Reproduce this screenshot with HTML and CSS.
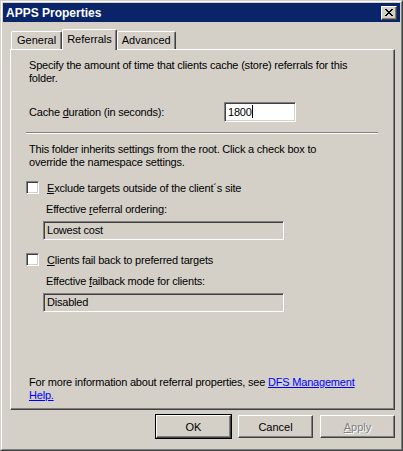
FILE: index.html
```html
<!DOCTYPE html>
<html lang="en">
<head>
    <meta charset="UTF-8">
    <title>APPS Properties</title>
    <link rel="stylesheet" href="styles.css">
</head>
<body>
    <div class="window">
        <div class="titlebar">
            <span class="title">APPS Properties</span>
            <button class="close-btn">
                <svg width="8" height="7" viewBox="0 0 8 7">
                    <path d="M0 0h2v1h1v1h2V1h1V0h2v1H7v1H6v1H5v1h1v1h1v1h1v1H6V6H5V5H3v1H2v1H0V6h1V5h1V4h1V3H2V2H1V1H0z" fill="#000"/>
                </svg>
            </button>
        </div>

        <div class="tabs">
            <div class="tab">General</div>
            <div class="tab tab-active">Referrals</div>
            <div class="tab">Advanced</div>
        </div>

        <div class="panel">
            <p class="text">Specify the amount of time that clients cache (store) referrals for this<br>folder.</p>
            <div class="row">
                <label class="row-label">Cache <u>d</u>uration (in seconds):</label>
                <div class="input">1800<span class="caret"></span></div>
            </div>
            <div class="separator"></div>

            <p class="text">This folder inherits settings from the root. Click a check box to<br>override the namespace settings.</p>

            <div class="check-row">
                <span class="checkbox"></span>
                <span><u>E</u>xclude targets outside of the client´s site</span>
            </div>
            <div class="sub">
                <p class="sub-label">Effective <u>r</u>eferral ordering:</p>
                <div class="field">Lowest cost</div>
            </div>

            <div class="check-row check-row-second">
                <span class="checkbox"></span>
                <span><u>C</u>lients fail back to preferred targets</span>
            </div>
            <div class="sub">
                <p class="sub-label">Effective <u>f</u>ailback mode for clients:</p>
                <div class="field">Disabled</div>
            </div>

            <p class="text more-info">For more information about referral properties, see <a href="#">DFS Management<br>Help.</a></p>
        </div>

        <div class="buttons">
            <button class="button button-default">OK</button>
            <button class="button">Cancel</button>
            <button class="button" disabled><u>A</u>pply</button>
        </div>
    </div>
</body>
</html>
```

FILE: styles.css
```css
body {
    margin: 0;
    background-color: #d4d0c8;
    font-family: "Liberation Sans", Arial, sans-serif;
    font-size: 11px;
    color: #000;
}
p {
    margin: 0;
}
.window {
    width: 403px;
    height: 451px;
    box-sizing: border-box;
    border: 1px solid;
    border-color: #d4d0c8 #404040 #404040 #d4d0c8;
    position: relative;
    display: flex;
    flex-direction: column;
}
.window::before {
    content: '';
    position: absolute;
    top: 0;
    left: 0;
    right: 0;
    bottom: 0;
    border: 1px solid;
    border-color: #fff #808080 #808080 #fff;
    pointer-events: none;
}
.titlebar {
    margin: 2px 2px 0 2px;
    height: 19px;
    background-color: #0a246a;
    display: flex;
    align-items: center;
    justify-content: space-between;
    padding: 0 3px 0 3px;
}
.title {
    color: #fff;
    font-weight: bold;
    font-size: 12px;
}
.close-btn {
    width: 16px;
    height: 14px;
    padding: 0;
    background-color: #d4d0c8;
    border: 1px solid;
    border-color: #fff #404040 #404040 #fff;
    box-shadow: inset -1px -1px 0 #808080;
    display: flex;
    align-items: center;
    justify-content: center;
}

/* tabs */
.tabs {
    display: flex;
    align-items: flex-end;
    margin: 6px 0 0 9px;
    height: 21px;
    position: relative;
    z-index: 1;
}
.tab {
    height: 17px;
    line-height: 17px;
    padding: 0 4px;
    border: 1px solid;
    border-color: #fff #404040 transparent #fff;
    border-bottom: none;
    border-radius: 2px 2px 0 0;
    box-shadow: inset -1px 0 0 #808080;
}
.tab:first-child {
    margin-left: 1px;
    padding: 0 5px;
}
.tab-active {
    height: 20px;
    line-height: 18px;
    padding: 0 4px;
    margin-bottom: -1px;
    background-color: #d4d0c8;
}

/* panel */
.panel {
    margin: 0 7px 0 9px;
    height: 361px;
    box-sizing: border-box;
    border: 1px solid;
    border-color: #fff #404040 #404040 #fff;
    box-shadow: inset -1px -1px 0 #808080;
    padding: 9px 16px 0 18px;
    display: flex;
    flex-direction: column;
    letter-spacing: -0.2px;
}
.text {
    line-height: 13px;
    width: 360px;
}
.row {
    display: flex;
    align-items: center;
    justify-content: space-between;
    margin-top: 17px;
    width: 267px;
}
.input {
    width: 72px;
    height: 20px;
    box-sizing: border-box;
    background-color: #fff;
    border: 1px solid;
    border-color: #808080 #fff #fff #808080;
    box-shadow: inset 1px 1px 0 #404040, inset -1px -1px 0 #d4d0c8;
    padding: 2px 3px;
    line-height: 14px;
}
.caret {
    display: inline-block;
    width: 1px;
    height: 13px;
    background-color: #000;
    vertical-align: -2px;
}
.separator {
    margin: 10px 0 9px -3px;
    width: 352px;
    border-top: 1px solid #808080;
    border-bottom: 1px solid #fff;
}
.check-row {
    display: flex;
    align-items: center;
    gap: 8px;
    margin: 12px 0 0 -3px;
    height: 13px;
}
.check-row-second {
    margin-top: 13px;
}
.checkbox {
    width: 13px;
    height: 13px;
    box-sizing: border-box;
    background-color: #fff;
    border: 1px solid;
    border-color: #808080 #fff #fff #808080;
    box-shadow: inset 1px 1px 0 #404040, inset -1px -1px 0 #d4d0c8;
}
.sub {
    margin-left: 17px;
}
.sub-label {
    margin-top: 9px;
    line-height: 13px;
}
.field {
    margin: 5px 0 0 -3px;
    width: 241px;
    height: 19px;
    box-sizing: border-box;
    border: 1px solid;
    border-color: #808080 #fff #fff #808080;
    box-shadow: inset 1px 1px 0 #404040, inset -1px -1px 0 #d4d0c8;
    padding: 2px 3px;
    line-height: 13px;
}
.more-info {
    margin-top: auto;
    margin-bottom: 7px;
}
.more-info a {
    color: #0000ff;
}

/* buttons */
.buttons {
    display: flex;
    justify-content: flex-end;
    gap: 7px;
    margin: 5px 7px 0 0;
}
.button {
    width: 75px;
    height: 23px;
    box-sizing: border-box;
    background-color: #d4d0c8;
    border: 1px solid;
    border-color: #fff #404040 #404040 #fff;
    box-shadow: inset -1px -1px 0 #808080;
    font-family: "Liberation Sans", Arial, sans-serif;
    font-size: 11px;
    color: #000;
    padding: 0;
}
.button-default {
    outline: 1px solid #000;
}
.button:disabled {
    color: #808080;
    text-shadow: 1px 1px 0 #fff;
}
```
